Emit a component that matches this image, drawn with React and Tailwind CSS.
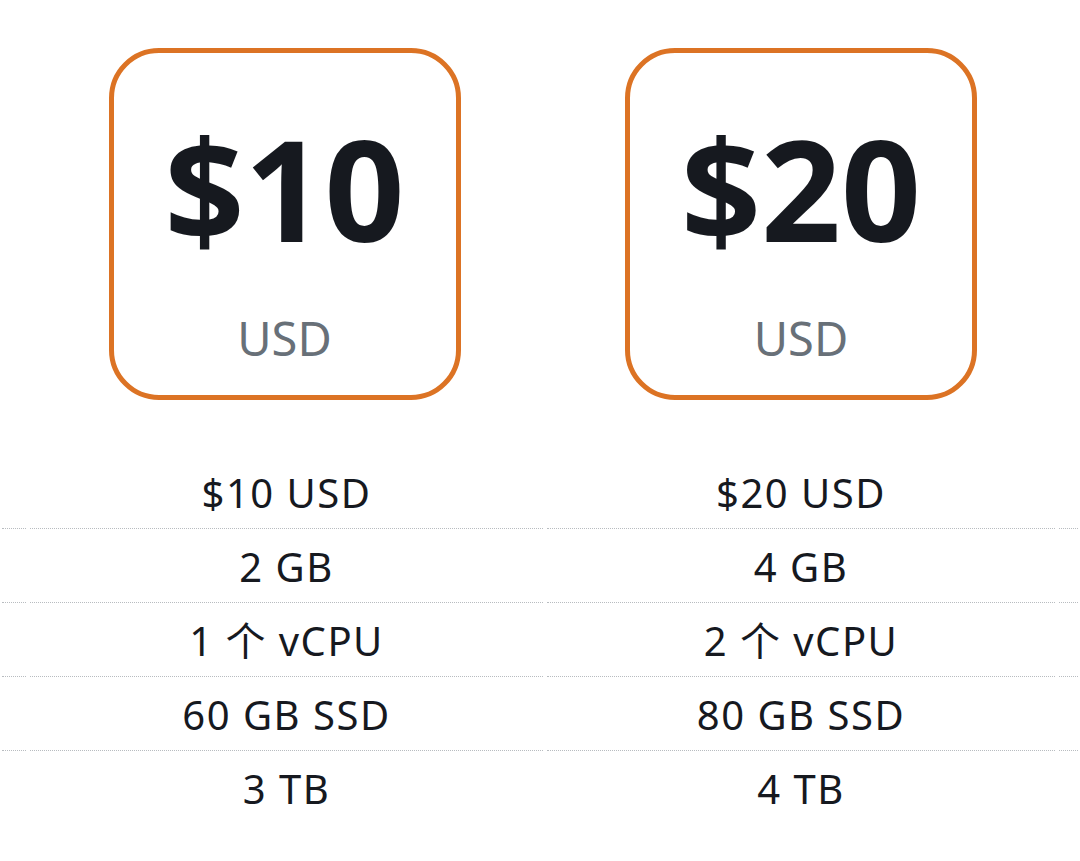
const plans = [
    { price: '$10', specs: ['$10 USD', '2 GB', '1 个 vCPU', '60 GB SSD', '3 TB'] },
    { price: '$20', specs: ['$20 USD', '4 GB', '2 个 vCPU', '80 GB SSD', '4 TB'] },
];

const font = { fontFamily: '"Noto Sans", "Noto Sans CJK SC", sans-serif' };

function PriceCard({ price }) {
    return (
        <div className="flex h-[352px] w-[352px] flex-col items-center rounded-[50px] border-[5px] border-[#dc7324] bg-white pt-[65px]">
            <div className="text-[140px] font-bold leading-none text-[#16191f]">{price}</div>
            <div className="mt-[57px] text-[47px] leading-none text-[#687078]">USD</div>
        </div>
    );
}

// Dotted separator cell, slight gap at the column edges
function Cell({ children, line }) {
    return (
        <div className="px-[2px]">
            <div className={`flex h-[74px] items-center justify-center pt-[2px] ${line ? 'border-b border-dotted border-[#b8bcc0]' : ''}`}>
                {children}
            </div>
        </div>
    );
}

export default function App() {
    const rows = [0, 1, 2, 3, 4];
    return (
        <div className="min-h-screen overflow-hidden bg-white" style={font}>
            {/* Karte */}
            <div className="grid grid-cols-[28px_517px_512px_1fr] pt-[48px]">
                <div />
                <div className="flex justify-center pr-[4px]">
                    <PriceCard price={plans[0].price} />
                </div>
                <div className="flex justify-center">
                    <PriceCard price={plans[1].price} />
                </div>
                <div />
            </div>

            {/* Specifikacije */}
            <div className="mt-[55px] grid grid-cols-[28px_517px_512px_1fr]">
                {rows.map((i) => (
                    <div key={i} className="contents">
                        <Cell line={i < 4} />
                        {plans.map((p) => (
                            <Cell key={p.price} line={i < 4}>
                                <span className="text-[40px] leading-none tracking-[1.5px] text-[#16191f]">{p.specs[i]}</span>
                            </Cell>
                        ))}
                        <Cell line={i < 4} />
                    </div>
                ))}
            </div>
        </div>
    );
}
